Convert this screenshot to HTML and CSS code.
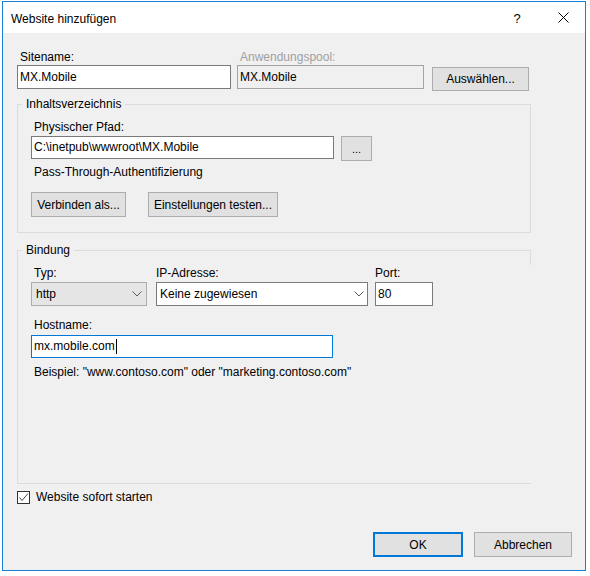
FILE: index.html
```html
<!DOCTYPE html>
<html lang="de">
<head>
<meta charset="utf-8">
<title>Website hinzufügen</title>
<link rel="stylesheet" href="styles.css">
</head>
<body>
<div class="window">
  <div class="titlebar">
    <div class="title">Website hinzufügen</div>
    <div class="help">?</div>
    <svg class="close" width="11" height="11" viewBox="0 0 11 11"><path d="M0.5 0.5 L10.5 10.5 M10.5 0.5 L0.5 10.5" stroke="#000" stroke-width="1" fill="none"/></svg>
  </div>
  <div class="content">
    <div class="row-top">
      <div class="field f-site">
        <div class="label">Sitename:</div>
        <div class="input">MX.Mobile</div>
      </div>
      <div class="field f-pool">
        <div class="label disabled">Anwendungspool:</div>
        <div class="input readonly">MX.Mobile</div>
      </div>
      <div class="btn btn-pool">Auswählen...</div>
    </div>

    <fieldset class="group g-content">
      <legend>Inhaltsverzeichnis</legend>
      <div class="label">Physischer Pfad:</div>
      <div class="path-row">
        <div class="input path">C:\inetpub\wwwroot\MX.Mobile</div>
        <div class="btn btn-browse">...</div>
      </div>
      <div class="text pass">Pass-Through-Authentifizierung</div>
      <div class="btn-row">
        <div class="btn btn-connect">Verbinden als...</div>
        <div class="btn btn-test">Einstellungen testen...</div>
      </div>
    </fieldset>

    <fieldset class="group g-binding">
      <legend>Bindung</legend>
      <div class="bind-row">
        <div class="field f-type">
          <div class="label">Typ:</div>
          <div class="select sel-type"><span>http</span>
            <svg class="chev" width="10" height="6" viewBox="0 0 10 6"><path d="M0.5 0.5 L5 5 L9.5 0.5" stroke="#5a5a5a" fill="none"/></svg>
          </div>
        </div>
        <div class="field f-ip">
          <div class="label nopad">IP-Adresse:</div>
          <div class="select sel-ip"><span>Keine zugewiesen</span>
            <svg class="chev" width="10" height="6" viewBox="0 0 10 6"><path d="M0.5 0.5 L5 5 L9.5 0.5" stroke="#5a5a5a" fill="none"/></svg>
          </div>
        </div>
        <div class="field f-port">
          <div class="label nopad">Port:</div>
          <div class="input port">80</div>
        </div>
      </div>
      <div class="label host-label">Hostname:</div>
      <div class="input host">mx.mobile.com<span class="caret"></span></div>
      <div class="text example">Beispiel: "www.contoso.com" oder "marketing.contoso.com"</div>
    </fieldset>

    <div class="check-row">
      <span class="checkbox"><svg width="11" height="11" viewBox="0 0 11 11"><path d="M1.5 5.5 L4 8.5 L10 1.5" stroke="#444" stroke-width="1" fill="none"/></svg></span>
      <span class="check-label">Website sofort starten</span>
    </div>

    <div class="dialog-buttons">
      <div class="btn btn-ok">OK</div>
      <div class="btn btn-cancel">Abbrechen</div>
    </div>
  </div>
</div>
</body>
</html>
```
FILE: styles.css
```css
* { box-sizing: border-box; }
html, body { margin: 0; padding: 0; background: #fff; }
body {
  font-family: "Liberation Sans", Arial, sans-serif;
  font-size: 12px;
  color: #000;
}
.window {
  margin: 1px 0 0 2px;
  width: 584px;
  height: 570px;
  border: 1px solid #1a7fd6;
  background: #f0f0f0;
  display: flex;
  flex-direction: column;
}
.titlebar {
  height: 31px;
  background: #fff;
  display: flex;
  align-items: center;
  padding-left: 8px;
  flex: none;
}
.title { flex: 1; line-height: 16px; padding-top: 2px; }
.help { width: 16px; text-align: center; margin-right: 33px; font-size: 13px; line-height: 16px; padding-top: 2px; }
.close { margin-right: 16px; display: block; }

.content {
  flex: 1;
  padding: 16px 13px 0 14px;
}
.label { line-height: 16px; padding-left: 3px; white-space: nowrap; }
.label.nopad { padding-left: 0; }
.label.disabled { color: #a0a0a0; }
.text { line-height: 16px; padding-left: 3px; white-space: nowrap; }

.input {
  height: 24px;
  border: 1px solid #7a7a7a;
  background: #fff;
  padding-left: 2px;
  line-height: 22px;
  white-space: nowrap;
}
.input.readonly { background: #f0f0f0; border-color: #a5a5a5; }

.btn {
  height: 25px;
  background: #e1e1e1;
  border: 1px solid #adadad;
  display: flex;
  align-items: center;
  justify-content: center;
  white-space: nowrap;
}

.row-top { display: flex; align-items: flex-start; }
.f-site { width: 214px; }
.f-pool { width: 187px; margin-left: 6px; }
.btn-pool { width: 97px; height: 24px; margin-left: 8px; margin-top: 18px; }

.group {
  margin: 0;
  width: 514px;
  border: 1px solid #dcdcdc;
  padding: 7px 12px 0 13px;
  min-inline-size: 0;
}
.group legend {
  padding: 0 4px;
  margin-left: -9px;
  line-height: 15px;
}
.g-content { margin-top: 6px; padding-bottom: 15px; }
.path-row { display: flex; align-items: flex-start; margin-top: 1px; }
.input.path { width: 303px; height: 23px; line-height: 21px; }
.btn-browse { width: 31px; margin-left: 7px; font-size: 11px; align-items: flex-end; padding-bottom: 6px; line-height: 10px; }
.pass { margin-top: 3px; }
.btn-row { display: flex; margin-top: 12px; }
.btn-connect { width: 95px; }
.btn-test { width: 130px; margin-left: 22px; }

.g-binding {
  margin-top: 10px;
  padding-bottom: 103px;
  border-right: none;
  position: relative;
}
.g-binding::after {
  content: "";
  position: absolute;
  right: 0;
  top: -8px;
  width: 1px;
  height: 15px;
  background: #dcdcdc;
}
.bind-row { display: flex; align-items: flex-start; }
.f-type { width: 116px; }
.f-ip { width: 212px; margin-left: 9px; }
.f-port { width: 58px; margin-left: 7px; }
.select {
  margin-top: 1px;
  height: 24px;
  display: flex;
  align-items: center;
  justify-content: space-between;
  white-space: nowrap;
}
.sel-type { background: #e5e5e5; border: 1px solid #adadad; padding: 0 4px 0 4px; }
.sel-ip { background: #fff; border: 1px solid #7a7a7a; padding: 0 3px 0 3px; }
.chev { display: block; }
.input.port { margin-top: 1px; }
.host-label { margin-top: 11px; }
.input.host {
  width: 302px;
  height: 23px;
  line-height: 21px;
  margin-top: 2px;
  border-color: #0078d7;
  display: flex;
  align-items: center;
}
.caret { display: inline-block; width: 1px; height: 15px; background: #000; margin-left: 1px; }
.example { margin-top: 6px; }

.check-row {
  margin-top: 5px;
  display: flex;
  align-items: center;
  height: 16px;
}
.checkbox {
  width: 13px;
  height: 13px;
  border: 1px solid #333;
  background: #fff;
  display: flex;
  align-items: center;
  justify-content: center;
}
.checkbox svg { display: block; }
.check-label { margin-left: 6px; line-height: 16px; }

.dialog-buttons {
  margin-top: 27px;
  display: flex;
  justify-content: flex-end;
}
.btn-ok { width: 90px; border: 2px solid #0078d7; }
.btn-cancel { width: 98px; margin-left: 11px; }
```
